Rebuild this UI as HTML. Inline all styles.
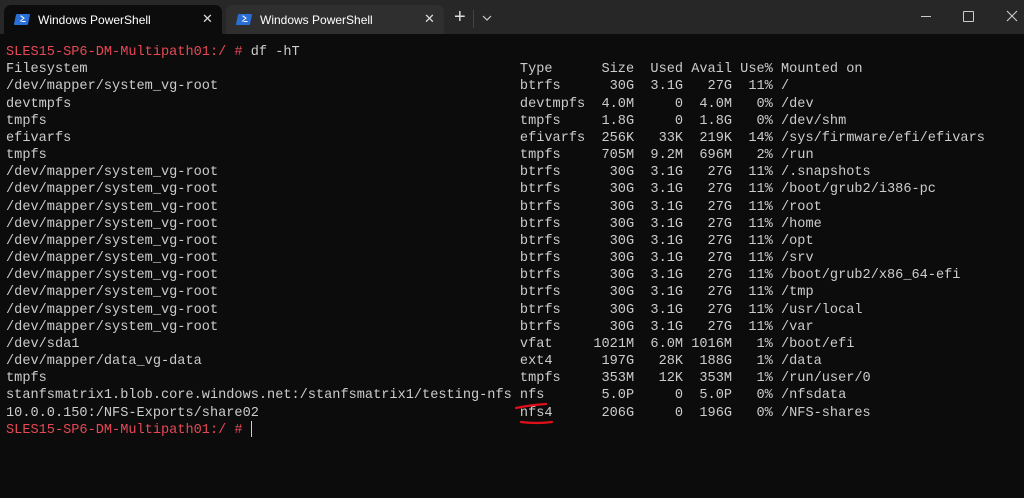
<!DOCTYPE html>
<html><head><meta charset="utf-8"><style>
html,body{margin:0;padding:0;width:1024px;height:498px;overflow:hidden;background:#0c0c0c}
.bar{position:absolute;left:0;top:0;width:1024px;height:34px;background:#272727}
.tab{position:absolute;top:5px;height:29px;width:218px;border-radius:7px 7px 0 0;font-family:"Liberation Sans",sans-serif;font-size:12px;color:#fff}
.tab .ic{position:absolute;left:11px;top:9px;width:14px;height:11px;background:#2a6fd6;transform:skewX(-12deg);border-radius:1px}
.tab .ic:after{content:"";position:absolute;left:3px;top:2px;width:4px;height:4px;border-right:1.5px solid #fff;border-bottom:1.5px solid #fff;transform:rotate(-45deg) skewX(12deg)}
.tab .ic:before{content:"";position:absolute;left:7px;top:7px;width:4px;height:1.3px;background:#fff}
.tab .tx{position:absolute;left:34px;top:8px}
.tab .x{position:absolute;left:198px;top:6px;font-size:13px;color:#ddd}
.term{position:absolute;left:6px;top:44px;font-family:"Liberation Mono",monospace;font-size:13.6px;color:#cccccc}
.r{position:relative;height:17.18px;line-height:17.18px;white-space:pre}
.r span{position:absolute;top:0}
.t{left:63ch}.s{left:72ch;width:5ch;text-align:right}.u{left:77ch;width:6ch;text-align:right}.a{left:83ch;width:6ch;text-align:right}.p{left:89ch;width:5ch;text-align:right}.m{left:95ch}
.red{color:#e74856}
</style></head><body>
<div class="bar"></div>
<div class="tab" style="left:4px;background:#0c0c0c"><div class="ic"></div><div class="tx">Windows PowerShell</div><div class="x">✕</div></div>
<div class="tab" style="left:226px;background:#2f2f2f"><div class="ic"></div><div class="tx">Windows PowerShell</div><div class="x">✕</div></div>
<div style="position:absolute;left:454px;top:6px;color:#ddd;font:20px 'Liberation Sans',sans-serif">+</div>
<div style="position:absolute;left:473px;top:10px;width:1px;height:18px;background:#444"></div>
<svg style="position:absolute;left:482px;top:15px" width="10" height="6"><path d="M1 1 L5 5 L9 1" stroke="#ccc" fill="none" stroke-width="1.2"/></svg>
<div style="position:absolute;left:921px;top:16px;width:10px;height:1px;background:#ccc"></div>
<div style="position:absolute;left:963px;top:11px;width:9px;height:9px;border:1px solid #ccc;border-radius:1px"></div>
<svg style="position:absolute;left:1006px;top:10px" width="12" height="12"><path d="M1 1L11 11M11 1L1 11" stroke="#ccc" stroke-width="1.1"/></svg>
<div class="term">
<div class="r"><span class="red">SLES15-SP6-DM-Multipath01:/ # </span><span style="left:30ch">df -hT</span></div>
<div class="r"><span>Filesystem</span><span class="t">Type</span><span class="s">Size</span><span class="u">Used</span><span class="a">Avail</span><span class="p">Use%</span><span class="m">Mounted on</span></div>
<div class="r"><span>/dev/mapper/system_vg-root</span><span class="t">btrfs</span><span class="s">30G</span><span class="u">3.1G</span><span class="a">27G</span><span class="p">11%</span><span class="m">/</span></div>
<div class="r"><span>devtmpfs</span><span class="t">devtmpfs</span><span class="s">4.0M</span><span class="u">0</span><span class="a">4.0M</span><span class="p">0%</span><span class="m">/dev</span></div>
<div class="r"><span>tmpfs</span><span class="t">tmpfs</span><span class="s">1.8G</span><span class="u">0</span><span class="a">1.8G</span><span class="p">0%</span><span class="m">/dev/shm</span></div>
<div class="r"><span>efivarfs</span><span class="t">efivarfs</span><span class="s">256K</span><span class="u">33K</span><span class="a">219K</span><span class="p">14%</span><span class="m">/sys/firmware/efi/efivars</span></div>
<div class="r"><span>tmpfs</span><span class="t">tmpfs</span><span class="s">705M</span><span class="u">9.2M</span><span class="a">696M</span><span class="p">2%</span><span class="m">/run</span></div>
<div class="r"><span>/dev/mapper/system_vg-root</span><span class="t">btrfs</span><span class="s">30G</span><span class="u">3.1G</span><span class="a">27G</span><span class="p">11%</span><span class="m">/.snapshots</span></div>
<div class="r"><span>/dev/mapper/system_vg-root</span><span class="t">btrfs</span><span class="s">30G</span><span class="u">3.1G</span><span class="a">27G</span><span class="p">11%</span><span class="m">/boot/grub2/i386-pc</span></div>
<div class="r"><span>/dev/mapper/system_vg-root</span><span class="t">btrfs</span><span class="s">30G</span><span class="u">3.1G</span><span class="a">27G</span><span class="p">11%</span><span class="m">/root</span></div>
<div class="r"><span>/dev/mapper/system_vg-root</span><span class="t">btrfs</span><span class="s">30G</span><span class="u">3.1G</span><span class="a">27G</span><span class="p">11%</span><span class="m">/home</span></div>
<div class="r"><span>/dev/mapper/system_vg-root</span><span class="t">btrfs</span><span class="s">30G</span><span class="u">3.1G</span><span class="a">27G</span><span class="p">11%</span><span class="m">/opt</span></div>
<div class="r"><span>/dev/mapper/system_vg-root</span><span class="t">btrfs</span><span class="s">30G</span><span class="u">3.1G</span><span class="a">27G</span><span class="p">11%</span><span class="m">/srv</span></div>
<div class="r"><span>/dev/mapper/system_vg-root</span><span class="t">btrfs</span><span class="s">30G</span><span class="u">3.1G</span><span class="a">27G</span><span class="p">11%</span><span class="m">/boot/grub2/x86_64-efi</span></div>
<div class="r"><span>/dev/mapper/system_vg-root</span><span class="t">btrfs</span><span class="s">30G</span><span class="u">3.1G</span><span class="a">27G</span><span class="p">11%</span><span class="m">/tmp</span></div>
<div class="r"><span>/dev/mapper/system_vg-root</span><span class="t">btrfs</span><span class="s">30G</span><span class="u">3.1G</span><span class="a">27G</span><span class="p">11%</span><span class="m">/usr/local</span></div>
<div class="r"><span>/dev/mapper/system_vg-root</span><span class="t">btrfs</span><span class="s">30G</span><span class="u">3.1G</span><span class="a">27G</span><span class="p">11%</span><span class="m">/var</span></div>
<div class="r"><span>/dev/sda1</span><span class="t">vfat</span><span class="s">1021M</span><span class="u">6.0M</span><span class="a">1016M</span><span class="p">1%</span><span class="m">/boot/efi</span></div>
<div class="r"><span>/dev/mapper/data_vg-data</span><span class="t">ext4</span><span class="s">197G</span><span class="u">28K</span><span class="a">188G</span><span class="p">1%</span><span class="m">/data</span></div>
<div class="r"><span>tmpfs</span><span class="t">tmpfs</span><span class="s">353M</span><span class="u">12K</span><span class="a">353M</span><span class="p">1%</span><span class="m">/run/user/0</span></div>
<div class="r"><span>stanfsmatrix1.blob.core.windows.net:/stanfsmatrix1/testing-nfs</span><span class="t">nfs</span><span class="s">5.0P</span><span class="u">0</span><span class="a">5.0P</span><span class="p">0%</span><span class="m">/nfsdata</span></div>
<div class="r"><span>10.0.0.150:/NFS-Exports/share02</span><span class="t">nfs4</span><span class="s">206G</span><span class="u">0</span><span class="a">196G</span><span class="p">0%</span><span class="m">/NFS-shares</span></div>
<div class="r"><span class="red">SLES15-SP6-DM-Multipath01:/ # </span></div>
</div>
<div style="position:absolute;left:251px;top:421px;width:1px;height:16px;background:#ccc"></div>
<svg style="position:absolute;left:0;top:0" width="1024" height="498"><path d="M516 408 Q530 405 546 404" stroke="#e0101a" stroke-width="2.2" fill="none" stroke-linecap="round"/><path d="M521 422 Q536 424 552 422" stroke="#e0101a" stroke-width="2.2" fill="none" stroke-linecap="round"/></svg>
</body></html>
